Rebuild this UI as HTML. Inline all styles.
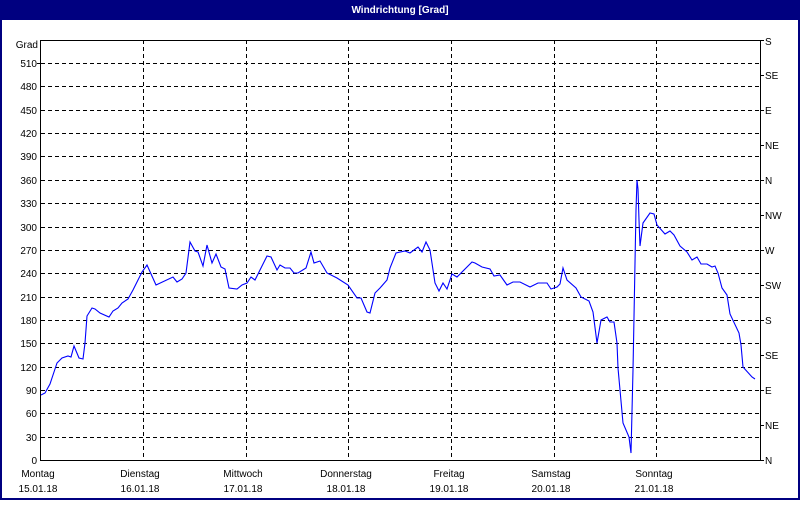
<!DOCTYPE html>
<html><head><meta charset="utf-8"><style>
html,body{margin:0;padding:0;background:#fff}
body{width:800px;height:500px;overflow:hidden}
svg text{font-family:"Liberation Sans",sans-serif;font-size:10px;fill:#000}
</style></head><body>
<svg width="800" height="500" xmlns="http://www.w3.org/2000/svg" shape-rendering="crispEdges">
<rect x="0" y="0" width="800" height="500" fill="#000080"/>
<rect x="2" y="20" width="796" height="478" fill="#fff"/>
<text x="400" y="13" text-anchor="middle" style="fill:#fff;font-weight:bold;font-size:10px">Windrichtung [Grad]</text>
<g stroke="#000" stroke-width="1" stroke-dasharray="4,3">
<line x1="41" y1="63.5" x2="760" y2="63.5"/><line x1="41" y1="86.5" x2="760" y2="86.5"/><line x1="41" y1="110.5" x2="760" y2="110.5"/><line x1="41" y1="133.5" x2="760" y2="133.5"/><line x1="41" y1="156.5" x2="760" y2="156.5"/><line x1="41" y1="180.5" x2="760" y2="180.5"/><line x1="41" y1="203.5" x2="760" y2="203.5"/><line x1="41" y1="227.5" x2="760" y2="227.5"/><line x1="41" y1="250.5" x2="760" y2="250.5"/><line x1="41" y1="273.5" x2="760" y2="273.5"/><line x1="41" y1="297.5" x2="760" y2="297.5"/><line x1="41" y1="320.5" x2="760" y2="320.5"/><line x1="41" y1="343.5" x2="760" y2="343.5"/><line x1="41" y1="367.5" x2="760" y2="367.5"/><line x1="41" y1="390.5" x2="760" y2="390.5"/><line x1="41" y1="413.5" x2="760" y2="413.5"/><line x1="41" y1="437.5" x2="760" y2="437.5"/>
<line x1="143.5" y1="40" x2="143.5" y2="460"/><line x1="246.5" y1="40" x2="246.5" y2="460"/><line x1="348.5" y1="40" x2="348.5" y2="460"/><line x1="451.5" y1="40" x2="451.5" y2="460"/><line x1="554.5" y1="40" x2="554.5" y2="460"/><line x1="656.5" y1="40" x2="656.5" y2="460"/>
</g>
<g stroke="#000" stroke-width="1">
<line x1="40.5" y1="40" x2="40.5" y2="461"/><line x1="760.5" y1="40" x2="760.5" y2="461"/>
<line x1="40" y1="40.5" x2="761" y2="40.5"/><line x1="40" y1="460.5" x2="761" y2="460.5"/>
<line x1="37" y1="63.5" x2="41" y2="63.5"/>
<line x1="760" y1="75.5" x2="764" y2="75.5"/><line x1="760" y1="110.5" x2="764" y2="110.5"/><line x1="760" y1="145.5" x2="764" y2="145.5"/><line x1="760" y1="180.5" x2="764" y2="180.5"/><line x1="760" y1="215.5" x2="764" y2="215.5"/><line x1="760" y1="250.5" x2="764" y2="250.5"/><line x1="760" y1="285.5" x2="764" y2="285.5"/><line x1="760" y1="320.5" x2="764" y2="320.5"/><line x1="760" y1="355.5" x2="764" y2="355.5"/><line x1="760" y1="390.5" x2="764" y2="390.5"/><line x1="760" y1="425.5" x2="764" y2="425.5"/><line x1="760" y1="40.5" x2="764" y2="40.5"/><line x1="760" y1="460.5" x2="764" y2="460.5"/>
</g>
<g text-anchor="end">
<text x="38" y="48">Grad</text>
<text x="37" y="67">510</text><text x="37" y="90">480</text><text x="37" y="114">450</text><text x="37" y="137">420</text><text x="37" y="160">390</text><text x="37" y="184">360</text><text x="37" y="207">330</text><text x="37" y="231">300</text><text x="37" y="254">270</text><text x="37" y="277">240</text><text x="37" y="301">210</text><text x="37" y="324">180</text><text x="37" y="347">150</text><text x="37" y="371">120</text><text x="37" y="394">90</text><text x="37" y="417">60</text><text x="37" y="441">30</text><text x="37" y="464">0</text>
</g>
<g>
<text x="765" y="45">S</text><text x="765" y="79">SE</text><text x="765" y="114">E</text><text x="765" y="149">NE</text><text x="765" y="184">N</text><text x="765" y="219">NW</text><text x="765" y="254">W</text><text x="765" y="289">SW</text><text x="765" y="324">S</text><text x="765" y="359">SE</text><text x="765" y="394">E</text><text x="765" y="429">NE</text><text x="765" y="464">N</text>
</g>
<g text-anchor="middle">
<text x="38" y="477">Montag</text><text x="38" y="492">15.01.18</text>
<text x="140" y="477">Dienstag</text><text x="140" y="492">16.01.18</text>
<text x="243" y="477">Mittwoch</text><text x="243" y="492">17.01.18</text>
<text x="346" y="477">Donnerstag</text><text x="346" y="492">18.01.18</text>
<text x="449" y="477">Freitag</text><text x="449" y="492">19.01.18</text>
<text x="551" y="477">Samstag</text><text x="551" y="492">20.01.18</text>
<text x="654" y="477">Sonntag</text><text x="654" y="492">21.01.18</text>
</g>
<polyline fill="none" stroke="#0000ff" stroke-width="1.1" shape-rendering="auto" points="41,395 45,393 50,384 57,363 62,358 68,356 71,357 74,346 79,358 83,359 85,343 87,316 92,308 95,309 100,313 109,317 113,311 118,308 122,303 128,299 133,290 142,272 147,265 156,285 173,277 177,282 182,279 186,273 190,242 195,251 198,252 203,266 207,245 212,263 216,254 221,267 225,269 229,288 237,289 242,285 247,283 251,277 255,280 267,256 271,257 277,270 280,265 285,268 290,268 294,273 298,273 306,268 311,252 314,263 320,261 327,273 337,278 348,285 357,298 361,298 367,312 370,313 375,293 380,288 387,280 390,268 396,253 405,251 410,253 418,247 422,252 426,242 430,250 435,283 439,291 443,283 447,289 452,274 457,277 472,262 475,263 482,267 490,269 494,276 500,275 507,285 513,282 520,282 530,287 538,283 547,283 551,289 557,287 560,284 563,268 567,280 576,288 581,297 589,301 593,312 597,343 601,320 607,317 610,322 614,322 617,343 618,368 620,390 623,423 629,437 631,453 633,370 634,317 635,263 636,210 637,180 638,189 639,220 640,246 643,223 650,213 654,214 657,225 665,234 670,231 674,235 680,246 687,252 692,260 697,257 701,264 707,264 712,267 715,266 718,273 722,288 727,295 730,314 739,333 741,345 743,367 752,377 755,379"/>
</svg>
</body></html>
